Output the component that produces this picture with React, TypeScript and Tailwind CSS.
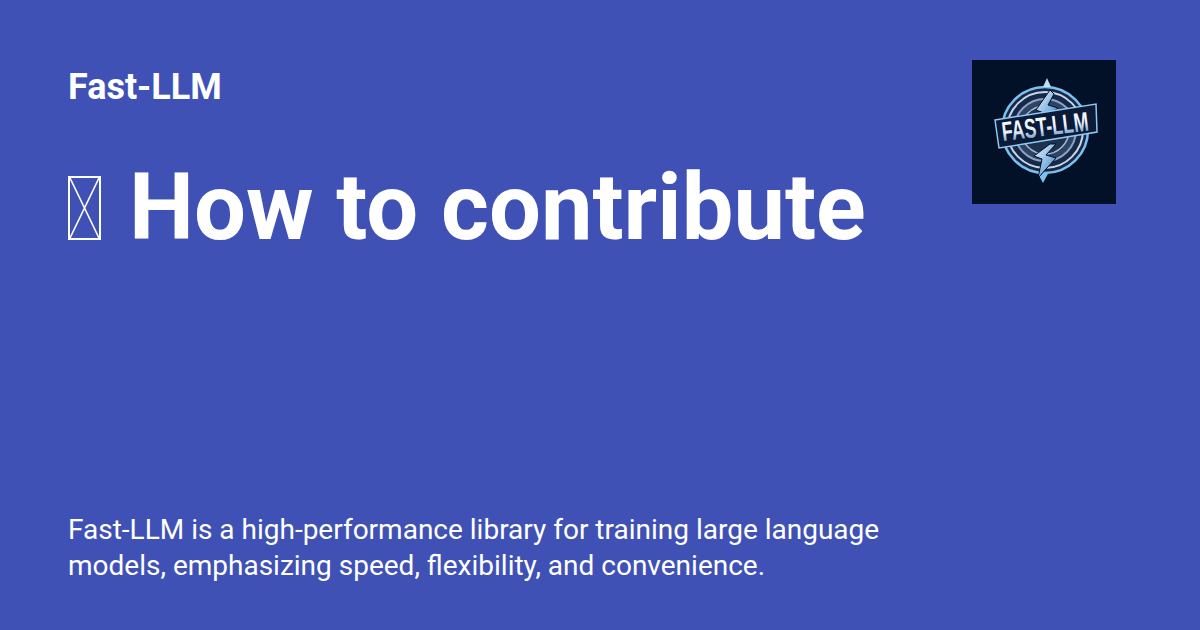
function Logo() {
  return (
    <svg width="144" height="144" viewBox="0 0 144 144" className="shrink-0 bg-[#021028]">
      <defs>
        <linearGradient id="txt" x1="0" y1="0" x2="0" y2="1">
          <stop offset="0" stopColor="#ffffff" />
          <stop offset="0.55" stopColor="#e6f0fa" />
          <stop offset="0.75" stopColor="#8fb4d8" />
          <stop offset="1" stopColor="#b9d2ea" />
        </linearGradient>
        <linearGradient id="bolt" x1="0" y1="0" x2="1" y2="1">
          <stop offset="0" stopColor="#eaf4fc" />
          <stop offset="0.6" stopColor="#7fb2e0" />
          <stop offset="1" stopColor="#2f6da8" />
        </linearGradient>
      </defs>
      {/* ring */}
      <circle cx="73" cy="70" r="43" fill="#16294a" stroke="#7cc0ee" strokeWidth="2.5" />
      <circle cx="73" cy="70" r="38" fill="none" stroke="#c9d6e4" strokeWidth="2" />
      <circle cx="73" cy="70" r="31" fill="#2c4468" stroke="#8ea4bd" strokeWidth="2" />
      <circle cx="73" cy="70" r="24" fill="#1d3150" stroke="#a8b9cc" strokeWidth="1.5" />
      {/* ring tips */}
      <path d="M75 18l4 9h-8z" fill="#b8e2f8" />
      <path d="M71 123l-6-11h12z" fill="#7cc0ee" />
      {/* top bolt */}
      <path
        d="M78 30L64 50L72 53L66 64L86 48L76 45L82 34z"
        fill="url(#bolt)"
        stroke="#021028"
        strokeWidth="1"
      />
      {/* bottom bolt */}
      <path
        d="M78 84L62 96L70 99L66 118L84 98L74 95L84 84z"
        fill="url(#bolt)"
        stroke="#021028"
        strokeWidth="1"
      />
      {/* banner */}
      <path d="M23 60L124 44L125 72L27 88z" fill="#0b1a36" stroke="#8fc8f0" strokeWidth="1.5" />
      <text
        x="31"
        y="81"
        fontFamily="'Liberation Sans', sans-serif"
        fontWeight="700"
        fontSize="27"
        fill="url(#txt)"
        textLength="87"
        lengthAdjust="spacingAndGlyphs"
        transform="rotate(-7 31 81)"
      >
        FAST-LLM
      </text>
    </svg>
  )
}

export default function App() {
  return (
    <div className="w-[1200px] h-[630px] bg-[#3f51b5] text-white font-['Roboto',sans-serif] pl-[68px] pr-[84px] pt-[60px] pb-[46px] flex flex-col justify-between overflow-hidden">
      <div className="flex justify-between items-start">
        <div>
          <div className="text-[36px] leading-[56px] font-bold -mt-[1px]">Fast-LLM</div>
          <h1 className="text-[92px] leading-[110px] font-bold mt-[38px] flex items-center">
            <span className="w-[33px] h-[64px] border-2 border-white mr-[28px] shrink-0">
              <svg viewBox="0 0 29 60" preserveAspectRatio="none" className="w-full h-full">
                <path d="M0 0L29 60M29 0L0 60" stroke="white" strokeWidth="1.6" />
              </svg>
            </span>
            How to contribute
          </h1>
        </div>
        <Logo />
      </div>
      <p className="text-[28px] leading-[36px] w-[840px]">
        Fast-LLM is a high-performance library for training large language models, emphasizing speed, flexibility, and convenience.
      </p>
    </div>
  )
}
